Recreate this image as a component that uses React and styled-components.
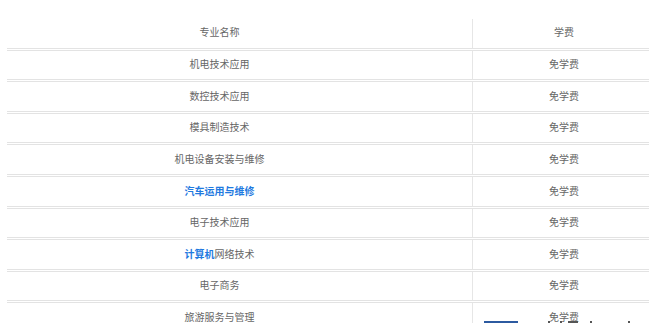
import React from 'react';
import styled, { createGlobalStyle } from 'styled-components';

const GlobalStyle = createGlobalStyle`
  html, body {
    margin: 0;
    padding: 0;
    background: #ffffff;
  }
  body {
    font-family: "Noto Sans CJK SC", "Noto Sans", sans-serif;
    overflow: hidden;
  }
`;

const Page = styled.div`
  position: relative;
  width: 665px;
  height: 323px;
  overflow: hidden;
  padding: 19px 0 0 7px;
  box-sizing: border-box;
`;

const Table = styled.div`
  width: 642px;
  display: flex;
  flex-direction: column;
`;

const Row = styled.div`
  display: grid;
  grid-template-columns: 465px 177px;
  height: 31.6px;
  box-sizing: border-box;
  border-bottom: 3px double #e3e3e3;
`;

const Cell = styled.div`
  display: flex;
  align-items: center;
  justify-content: center;
  font-size: 10px;
  line-height: 1;
  color: #666666;
  padding-bottom: ${props => (props.header ? '2px' : '1.5px')};
  padding-right: ${props => (props.first ? '40px' : '0')};
  padding-left: ${props => (props.first ? '0' : '6px')};
  border-left: ${props => (props.first ? 'none' : '1px solid #e6e6e6')};
  white-space: nowrap;
`;

const Highlight = styled.span`
  color: #1f7ae0;
  font-weight: 700;
`;

const FooterPeek = styled.div`
  position: absolute;
  left: 484px;
  top: 321px;
  display: flex;
  align-items: flex-start;
`;

const BlueTab = styled.div`
  width: 34px;
  height: 2px;
  background: #2c5aa0;
`;

const Dot = styled.span`
  position: absolute;
  top: 0;
  width: ${props => props.w || 2}px;
  height: 2px;
  background: #555;
`;

const rows = [
  { name: '机电技术应用' },
  { name: '数控技术应用' },
  { name: '模具制造技术' },
  { name: '机电设备安装与维修' },
  { name: <Highlight>汽车运用与维修</Highlight> },
  { name: '电子技术应用' },
  { name: <><Highlight>计算机</Highlight>网络技术</> },
  { name: '电子商务' },
  { name: '旅游服务与管理' },
];

export default function App() {
  return (
    <>
      <GlobalStyle />
      <Page>
        <Table>
          <Row>
            <Cell first header>专业名称</Cell>
            <Cell header>学费</Cell>
          </Row>
          {rows.map((r, i) => (
            <Row key={i}>
              <Cell first>{r.name}</Cell>
              <Cell>免学费</Cell>
            </Row>
          ))}
        </Table>
        <FooterPeek>
          <BlueTab />
          <Dot style={{ left: 64 }} />
          <Dot style={{ left: 76 }} />
          <Dot style={{ left: 84 }} w={10} />
          <Dot style={{ left: 106 }} />
          <Dot style={{ left: 144 }} />
        </FooterPeek>
      </Page>
    </>
  );
}
